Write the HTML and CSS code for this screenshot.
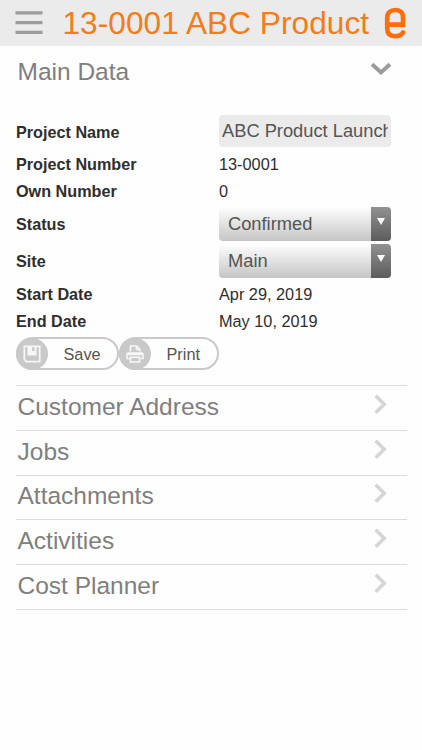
FILE: index.html
```html
<!DOCTYPE html>
<html lang="en">
<head>
<meta charset="utf-8">
<title>13-0001 ABC Product</title>
<link rel="stylesheet" href="styles.css">
</head>
<body>
<header class="bar">
  <svg class="menu" width="28" height="24" viewBox="0 0 28 24"><path d="M.5 1.8h27M.5 11.7h27M.5 21.4h27" stroke="#9c9c9e" stroke-width="3.2"/></svg>
  <h1 class="title">13-0001 ABC Product</h1>
  <svg class="logo" width="24" height="33" viewBox="0 0 24 33"><path d="M4 17.6H20V10.2C20 5.3 16.8 3 12.2 3S4.2 5.7 4.2 10.5V21.8C4.2 26.9 7.2 29.2 12 29.2C15.6 29.2 18.3 28 20 25.4" fill="none" stroke="#ff6d0c" stroke-width="4.6" stroke-linecap="round"/></svg>
</header>
<main>
  <section>
    <h2 class="heading open">Main Data
      <svg width="22" height="14" viewBox="0 0 22 14"><path d="M2 2.2l9 8.2 9-8.2" fill="none" stroke="#9b9b9b" stroke-width="4"/></svg>
    </h2>
    <div class="fields">
      <label class="row">Project Name</label><input class="text" value="ABC Product Launch">
      <span class="row">Project Number</span><span class="value">13-0001</span>
      <span class="row">Own Number</span><span class="value">0</span>
      <span class="row">Status</span><div class="select"><span>Confirmed</span><i class="arrow"></i></div>
      <span class="row">Site</span><div class="select"><span>Main</span><i class="arrow"></i></div>
      <span class="row">Start Date</span><span class="value">Apr 29, 2019</span>
      <span class="row">End Date</span><span class="value">May 10, 2019</span>
    </div>
    <div class="actions">
      <button class="action save"><span class="disc"><svg width="18" height="18" viewBox="0 0 18 18" fill="none" stroke="#f7f7f7" stroke-width="1.7"><path d="M1.3 1.3h15.4v15.4H3.5L1.3 14.5z"/><path d="M4.5 1v9.5h9V1H11.6v5H9V1z" fill="#f7f7f7" stroke="none"/></svg></span><span class="caption">Save</span></button>
      <button class="action print"><span class="disc"><svg width="18" height="18" viewBox="0 0 18 18" fill="none" stroke="#f7f7f7" stroke-width="1.6"><path d="M4.5 6.5V1h6.2L14 4.3v2.2"/><path d="M10.5 1v3.5H14"/><path d="M3.5 13.5H1V9.3Q1 8 2.3 8h13.4Q17 8 17 9.3v4.2h-2.5M2 9.5h14"/><path d="M4.5 12.2h9v4.8h-9z"/></svg></span><span class="caption">Print</span></button>
    </div>
  </section>
  <nav class="sections">
    <h2 class="heading">Customer Address<svg width="13" height="21" viewBox="0 0 13 21"><path d="M1.7 1.7l8.5 8.5-8.5 8.5" fill="none" stroke="#d5d5d5" stroke-width="3.6"/></svg></h2>
    <h2 class="heading">Jobs<svg width="13" height="21" viewBox="0 0 13 21"><path d="M1.7 1.7l8.5 8.5-8.5 8.5" fill="none" stroke="#d5d5d5" stroke-width="3.6"/></svg></h2>
    <h2 class="heading">Attachments<svg width="13" height="21" viewBox="0 0 13 21"><path d="M1.7 1.7l8.5 8.5-8.5 8.5" fill="none" stroke="#d5d5d5" stroke-width="3.6"/></svg></h2>
    <h2 class="heading">Activities<svg width="13" height="21" viewBox="0 0 13 21"><path d="M1.7 1.7l8.5 8.5-8.5 8.5" fill="none" stroke="#d5d5d5" stroke-width="3.6"/></svg></h2>
    <h2 class="heading">Cost Planner<svg width="13" height="21" viewBox="0 0 13 21"><path d="M1.7 1.7l8.5 8.5-8.5 8.5" fill="none" stroke="#d5d5d5" stroke-width="3.6"/></svg></h2>
  </nav>
</main>
</body>
</html>
```
FILE: styles.css
```css
* { box-sizing: border-box; }
body {
  margin: 0;
  background: #fefefe;
  color: #2e2e2e;
  font-family: "Liberation Sans", Arial, sans-serif;
}
.bar {
  display: flex;
  align-items: center;
  height: 46px;
  padding: 0 15px 0 14.5px;
  background: #ebebeb;
}
.title {
  flex: 1;
  margin: 0 0 0 20px;
  color: #f57c17;
  font-size: 31.6px;
  font-weight: 400;
  letter-spacing: .05px;
  line-height: 46px;
  white-space: nowrap;
}
.logo { flex: none; }
main { padding: 0 15px 0 16px; }
.heading {
  display: flex;
  align-items: center;
  justify-content: space-between;
  height: 44.8px;
  margin: 0;
  padding: 0 20px 2px 1.5px;
  border-bottom: 1px solid #dcdcdc;
  color: #7f7f7f;
  font-size: 24.5px;
  font-weight: 400;
}
.heading svg { margin-top: -5px; }
.heading.open {
  height: 69px;
  padding: 0 15px 17px 1.5px;
  border: 0;
}
.heading.open svg { margin-top: -7px; }
.fields {
  display: grid;
  grid-template-columns: 203px 173px;
  grid-template-rows: 35.5px 27.5px 27.5px 37px 37.5px 28px 27px;
  align-items: center;
  font-size: 16.3px;
}
.row {
  font-size: 16.2px;
  font-weight: 700;
}
.text, .select {
  width: 172.4px;
  border: 0;
  border-radius: 4px;
  color: #555;
  font: 18.3px "Liberation Sans", Arial, sans-serif;
}
.text {
  height: 32px;
  margin-top: -3px;
  padding: 0 3px;
  background: #ebebeb;
}
.select {
  display: flex;
  align-items: center;
  justify-content: space-between;
  height: 34px;
  padding-left: 9px;
  overflow: hidden;
  background: linear-gradient(#fefefe, #c5c5c5);
}
.arrow {
  display: flex;
  justify-content: center;
  width: 20.4px;
  height: 34px;
  padding-top: 11px;
  background: linear-gradient(#919191, #5c5c5c);
}
.arrow::after {
  content: "";
  height: 0;
  border: 4px solid transparent;
  border-top: 7px solid #fff;
  border-bottom: 0;
}
.actions {
  display: flex;
  height: 50px;
  padding-top: 2px;
}
.action {
  display: flex;
  align-items: center;
  width: 103px;
  height: 33px;
  padding: 0;
  border: 2px solid #c9c9c9;
  border-radius: 17px;
  background: #fefefe;
  color: #555;
  font: 16.3px "Liberation Sans", Arial, sans-serif;
}
.print { width: 100px; }
.disc {
  display: flex;
  align-items: center;
  justify-content: center;
  width: 32px;
  height: 32px;
  margin-left: -2px;
  border-radius: 50%;
  background: #c9c9c9;
}
.caption {
  margin-left: 15.5px;
  padding-top: 1px;
}
.sections { border-top: 1px solid #dcdcdc; }
```
